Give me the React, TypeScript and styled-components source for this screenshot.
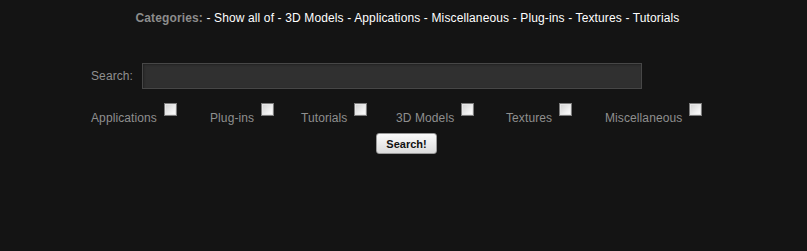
import React from "react";
import styled, { createGlobalStyle } from "styled-components";

const GlobalStyle = createGlobalStyle`
  html, body {
    margin: 0;
    padding: 0;
    background: #141414;
  }
  body {
    font-family: "Liberation Sans", Arial, sans-serif;
    font-size: 12px;
    letter-spacing: 0.1px;
    color: #8f8f8f;
  }
`;

const Page = styled.div`
  width: 807px;
  height: 251px;
  background: #141414;
`;

const CategoryBar = styled.div`
  padding: 11px 0 0 8px;
  text-align: center;
  line-height: 15px;
  color: #ffffff;
  letter-spacing: 0.13px;
`;

const BarLabel = styled.span`
  font-weight: bold;
  color: #8c8c8c;
`;

const CategoryLink = styled.a`
  color: #ffffff;
  text-decoration: none;
  cursor: pointer;
`;

const SearchForm = styled.form`
  width: 625px;
  margin: 0 auto;
  padding-top: 37px;
`;

const SearchRow = styled.div`
  display: flex;
  align-items: center;
  gap: 9px;
`;

const FieldLabel = styled.label`
  color: #8f8f8f;
`;

const SearchInput = styled.input`
  box-sizing: border-box;
  width: 500px;
  height: 26px;
  background: #303030;
  border: 1px solid #474747;
  box-shadow: inset 1px 1px 2px #222;
  color: #ddd;
  outline: none;
`;

const FilterRow = styled.div`
  display: flex;
  align-items: flex-start;
  margin-top: 19px;
`;

const Filter = styled.label<{ $width: number }>`
  display: flex;
  align-items: flex-start;
  width: ${(p) => p.$width}px;
  flex-shrink: 0;
  color: #8f8f8f;
  line-height: 14px;
  padding-top: 3px;
`;

const Box = styled.input`
  appearance: none;
  box-sizing: border-box;
  width: 13px;
  height: 13px;
  margin: -8px 0 0 7px;
  border: 1px solid #7c7c7c;
  background: linear-gradient(135deg, #cfcfcf, #f4f4f4 70%, #ffffff);
  box-shadow: inset 0 0 0 1px #e6e6e6;
`;

const ButtonRow = styled.div`
  display: flex;
  justify-content: center;
  margin-top: 8px;
  padding-left: 6px;
`;

const SubmitButton = styled.button`
  height: 21px;
  padding: 0 9px;
  font-family: "Liberation Sans", Arial, sans-serif;
  font-size: 11px;
  font-weight: bold;
  color: #111;
  background: linear-gradient(#fbfbfb, #dcdcdc);
  border: 1px solid #9a9a9a;
  border-radius: 3px;
`;

const categories = [
  "Show all of",
  "3D Models",
  "Applications",
  "Miscellaneous",
  "Plug-ins",
  "Textures",
  "Tutorials",
];

const filters = [
  { name: "Applications", width: 119 },
  { name: "Plug-ins", width: 91 },
  { name: "Tutorials", width: 95 },
  { name: "3D Models", width: 110 },
  { name: "Textures", width: 99 },
  { name: "Miscellaneous", width: 111 },
];

const App: React.FC = () => {
  return (
    <Page>
      <GlobalStyle />
      <CategoryBar>
        <BarLabel>Categories:</BarLabel>
        {categories.map((c) => (
          <React.Fragment key={c}>
            {" - "}
            <CategoryLink>{c}</CategoryLink>
          </React.Fragment>
        ))}
      </CategoryBar>
      <SearchForm onSubmit={(e) => e.preventDefault()}>
        <SearchRow>
          <FieldLabel htmlFor="q">Search:</FieldLabel>
          <SearchInput id="q" type="text" />
        </SearchRow>
        <FilterRow>
          {filters.map((f) => (
            <Filter key={f.name} $width={f.width}>
              {f.name}
              <Box type="checkbox" />
            </Filter>
          ))}
        </FilterRow>
        <ButtonRow>
          <SubmitButton type="submit">Search!</SubmitButton>
        </ButtonRow>
      </SearchForm>
    </Page>
  );
};

export default App;
